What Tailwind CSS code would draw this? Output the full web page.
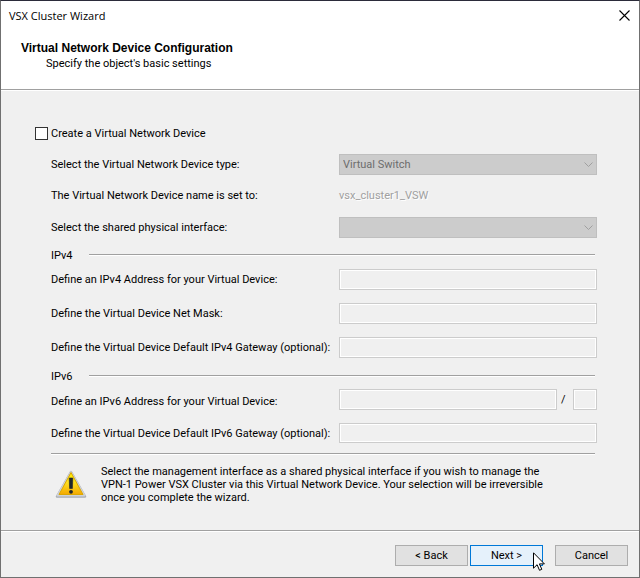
<!DOCTYPE html>
<html lang="en">
<head>
    <meta charset="UTF-8">
    <meta name="viewport" content="width=device-width, initial-scale=1.0">
    <title>VSX Cluster Wizard</title>
    <script src="https://cdn.jsdelivr.net/npm/@tailwindcss/browser@4"></script>
</head>
<body class="min-h-screen flex flex-col border border-[#707070] border-t-[#2b2b3a] bg-[#f0f0f0] font-['Roboto',sans-serif] text-[11px] leading-[13px] text-black">

    <!-- Title bar -->
    <div class="flex items-center justify-between h-[29px] pl-2 pr-[9px] bg-white">
        <h1 class="font-['Open_Sans',sans-serif] text-[11px]">VSX Cluster Wizard</h1>
        <button type="button" aria-label="Close">
            <svg class="w-[11px] h-[11px]" viewBox="0 0 11 11" stroke="#000" stroke-width="1.1" fill="none">
                <path d="M.5 .5l10 10M10.5 .5l-10 10"/>
            </svg>
        </button>
    </div>

    <!-- Page heading -->
    <header class="h-[60px] pl-5 pt-[11px] bg-white border-b border-[#a0a0a0]">
        <h2 class="font-['Liberation_Sans',sans-serif] text-[12px] leading-[15px] font-bold">Virtual Network Device Configuration</h2>
        <p class="pl-[25px] leading-[15px]">Specify the object's basic settings</p>
    </header>

    <main class="grow pl-[50px] pr-[42px] pt-9 border-t border-white">
        <form id="deviceForm">
            <label class="flex items-center h-[13px] -ml-4 mb-[14px] gap-[3px]">
                <input type="checkbox" class="appearance-none w-[13px] h-[13px] border border-[#333] bg-white checked:bg-[#0078d7]">
                Create a Virtual Network Device
            </label>

            <div class="flex items-center h-[21px] mb-[10px]">
                <label for="deviceType" class="w-72 shrink-0">Select the Virtual Network Device type:</label>
                <div class="relative grow">
                    <select id="deviceType" disabled class="block appearance-none w-full h-[21px] px-[3px] border border-[#bfbfbf] bg-[#ccc] text-[#6d6d6d] opacity-100">
                        <option>Virtual Switch</option>
                    </select>
                    <svg class="absolute right-1 top-2 w-[9px] h-[6px]" viewBox="0 0 9 6" fill="none" stroke="#a0a0a0"><path d="M.5 .5l4 4 4-4"/></svg>
                </div>
            </div>

            <div class="flex items-center h-[21px] mb-[11px]">
                <span class="w-72 shrink-0">The Virtual Network Device name is set to:</span>
                <output class="text-[#a0a0a0] [text-shadow:1px_1px_0_#fff]">vsx_cluster1_VSW</output>
            </div>

            <div class="flex items-center h-[21px] mb-[9px]">
                <label for="sharedInterface" class="w-72 shrink-0">Select the shared physical interface:</label>
                <div class="relative grow">
                    <select id="sharedInterface" disabled class="block appearance-none w-full h-[21px] px-[3px] border border-[#bfbfbf] bg-[#ccc] text-[#6d6d6d] opacity-100">
                        <option></option>
                    </select>
                    <svg class="absolute right-1 top-2 w-[9px] h-[6px]" viewBox="0 0 9 6" fill="none" stroke="#a0a0a0"><path d="M.5 .5l4 4 4-4"/></svg>
                </div>
            </div>

            <!-- IPv4 -->
            <div class="flex items-center h-4 mb-[6px]">
                <h3 class="w-[38px]">IPv4</h3>
                <div class="grow h-[2px] mr-[2px] border-t border-[#a0a0a0] bg-white"></div>
            </div>
            <div class="flex items-center h-[21px] mb-[13px]">
                <label for="ipv4Address" class="w-72 shrink-0">Define an IPv4 Address for your Virtual Device:</label>
                <input id="ipv4Address" type="text" disabled class="grow min-w-0 h-[21px] px-1 border border-[#ccc] bg-[#f0f0f0] inset-ring inset-ring-white">
            </div>
            <div class="flex items-center h-[21px] mb-[13px]">
                <label for="netMask" class="w-72 shrink-0">Define the Virtual Device Net Mask:</label>
                <input id="netMask" type="text" disabled class="grow min-w-0 h-[21px] px-1 border border-[#ccc] bg-[#f0f0f0] inset-ring inset-ring-white">
            </div>
            <div class="flex items-center h-[21px] mb-[10px]">
                <label for="ipv4Gateway" class="w-72 shrink-0">Define the Virtual Device Default IPv4 Gateway (optional):</label>
                <input id="ipv4Gateway" type="text" disabled class="grow min-w-0 h-[21px] px-1 border border-[#ccc] bg-[#f0f0f0] inset-ring inset-ring-white">
            </div>

            <!-- IPv6 -->
            <div class="flex items-center h-4 mb-[5px]">
                <h3 class="w-[38px]">IPv6</h3>
                <div class="grow h-[2px] mr-[2px] border-t border-[#a0a0a0] bg-white"></div>
            </div>
            <div class="flex items-center h-[21px] mb-[13px]">
                <label for="ipv6Address" class="w-72 shrink-0 pt-1">Define an IPv6 Address for your Virtual Device:</label>
                <input id="ipv6Address" type="text" disabled class="grow min-w-0 h-[21px] px-1 border border-[#ccc] bg-[#f0f0f0] inset-ring inset-ring-white">
                <span class="w-4 shrink-0 pl-1">/</span>
                <input type="text" disabled aria-label="Prefix length" class="w-6 h-[21px] px-1 border border-[#ccc] bg-[#f0f0f0] inset-ring inset-ring-white">
            </div>
            <div class="flex items-center h-5">
                <label for="ipv6Gateway" class="w-72 shrink-0">Define the Virtual Device Default IPv6 Gateway (optional):</label>
                <input id="ipv6Gateway" type="text" disabled class="grow min-w-0 h-5 px-1 border border-[#ccc] bg-[#f0f0f0] inset-ring inset-ring-white">
            </div>

            <!-- Warning -->
            <div class="flex mt-[10px] mr-[2px] pt-[11px] pb-6 border-t border-[#a0a0a0] shadow-[inset_0_1px_0_#fff]">
                <svg class="shrink-0 w-8 h-8 ml-1 mt-1 mr-[14px]" viewBox="0 0 32 32">
                    <defs>
                        <linearGradient id="warnFill" x1="0" y1="0" x2="0" y2="1">
                            <stop offset="0" stop-color="#fdf000"/>
                            <stop offset=".45" stop-color="#ffe020"/>
                            <stop offset="1" stop-color="#f3a800"/>
                        </linearGradient>
                    </defs>
                    <path d="M16 3L30 27.500H2z" fill="#a8acb3" stroke="#a8acb3" stroke-width="2.500" stroke-linejoin="round"/>
                    <path d="M16 3L29.500 26.500H2.500z" fill="#e4e6e8" stroke="#cfd2d6" stroke-width="2" stroke-linejoin="round"/>
                    <path d="M16 3.500L28 25.500H4z" fill="url(#warnFill)" stroke="#dca600" stroke-width="1" stroke-linejoin="round"/>
                    <path d="M14.200 9h3.600l-.4 10.500h-2.800z" fill="#20262c" stroke="#20262c" stroke-width=".6"/>
                    <circle cx="16" cy="22.800" r="1.900" fill="#20262c"/>
                </svg>
                <p>
                    Select the management interface as a shared physical interface if you wish to manage the<br>
                    VPN-1 Power VSX Cluster via this Virtual Network Device. Your selection will be irreversible<br>
                    once you complete the wizard.
                </p>
            </div>
        </form>
    </main>

    <!-- Buttons -->
    <footer class="flex justify-end h-[47px] pt-[14px] pr-[11px] border-t border-[#a0a0a0] shadow-[inset_0_1px_0_#fff]">
        <button type="button" class="w-[73px] h-[21px] mr-[2px] border border-[#adadad] bg-[#e1e1e1] text-[11px]">&lt; Back</button>
        <div class="relative mr-3">
            <button type="submit" form="deviceForm" class="block w-[73px] h-[21px] border border-[#0078d7] bg-[#e5f1fb] text-[11px]">Next &gt;</button>
            <svg class="absolute left-[63px] top-[7px] w-3 h-[19px] pointer-events-none" viewBox="0 0 12 19" fill="#fff" stroke="#000">
                <path d="M.5 .8v15.400l3.600-3.500 2.400 5.600 2.300-1-2.400-5.400h5z"/>
            </svg>
        </div>
        <button type="button" class="w-[73px] h-[21px] border border-[#adadad] bg-[#e1e1e1] text-[11px]">Cancel</button>
    </footer>

</body>
</html>
